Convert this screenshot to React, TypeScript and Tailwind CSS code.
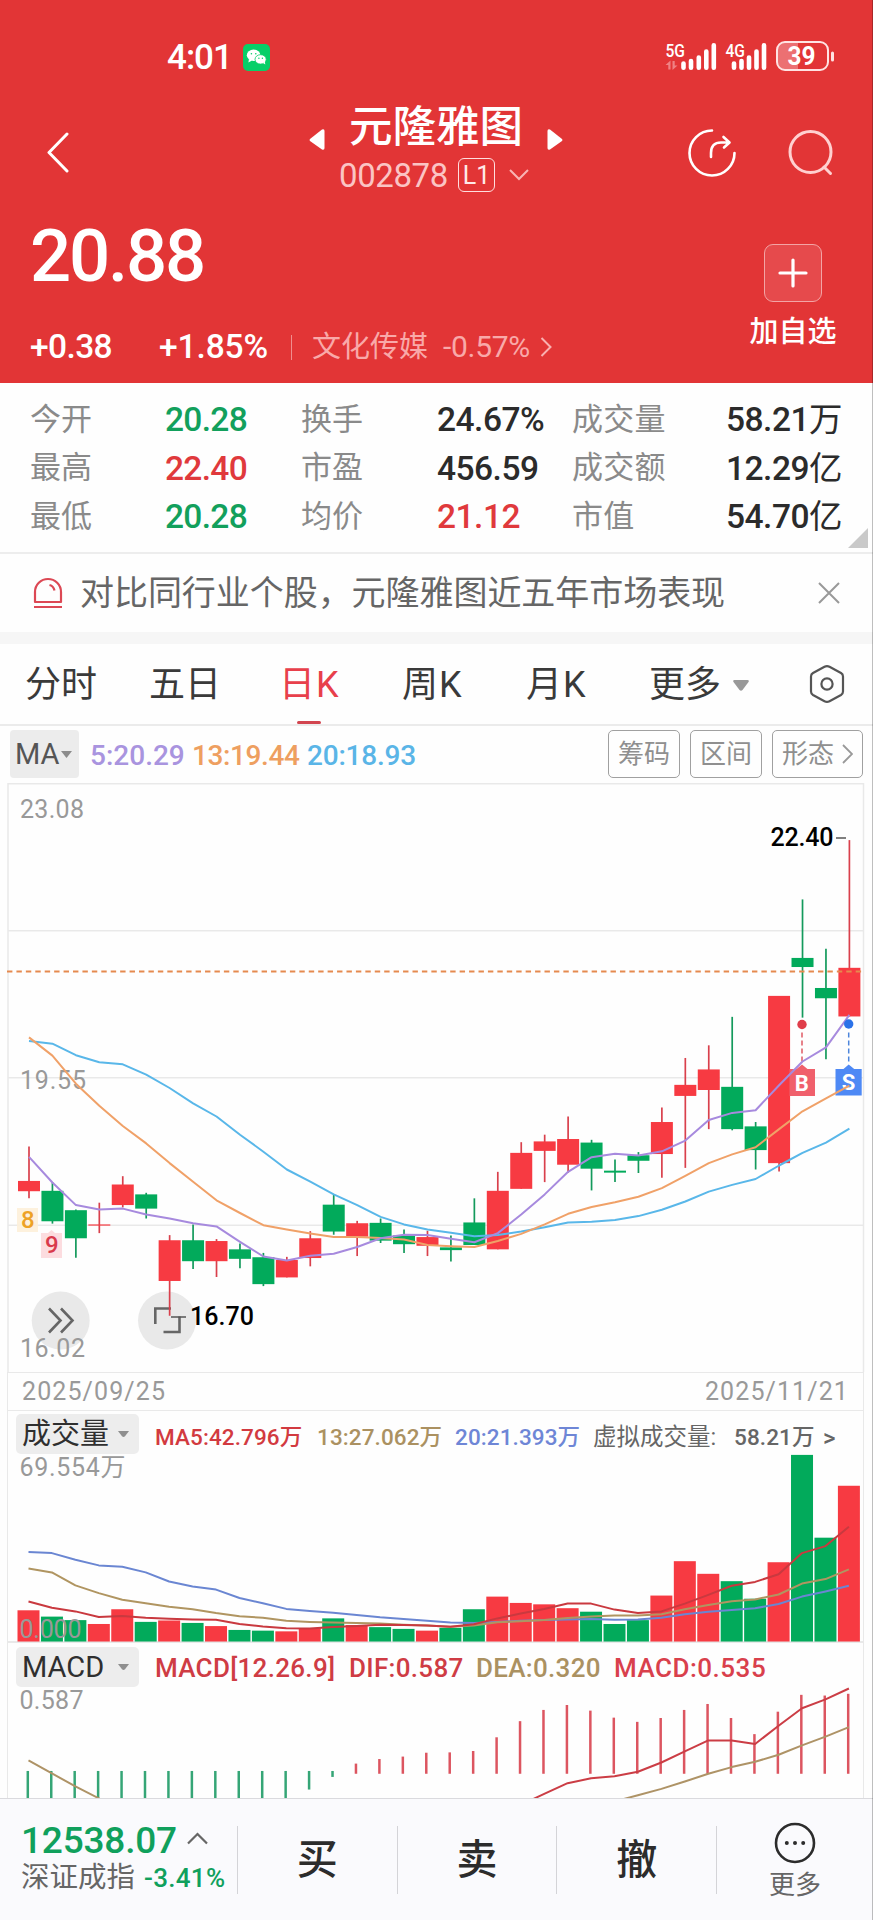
import type { ReactNode } from 'react'

interface Candle {
  up: boolean
  high: number
  top: number
  bottom: number
  low: number
}

interface Stat {
  label: string
  value: string
  color?: string
}

const UP = '#f73a42'
const DOWN = '#02aa5b'
const UP_WICK = '#d9404c'
const DOWN_WICK = '#149a5c'

// up, high, body top, body bottom, low
const RAW: [number, number, number, number, number][] = [
  [1, 927, 1014, 1040, 1058],
  [0, 1017, 1039, 1116, 1122],
  [0, 1086, 1088, 1159, 1208],
  [1, 1069, 1124, 1127, 1146],
  [1, 1002, 1023, 1075, 1081],
  [0, 1044, 1048, 1084, 1109],
  [1, 1151, 1164, 1267, 1355],
  [0, 1124, 1164, 1217, 1237],
  [1, 1161, 1166, 1217, 1257],
  [0, 1172, 1187, 1211, 1235],
  [0, 1196, 1207, 1275, 1280],
  [1, 1206, 1214, 1258, 1258],
  [1, 1141, 1159, 1209, 1230],
  [0, 1049, 1074, 1142, 1150],
  [1, 1115, 1121, 1155, 1204],
  [0, 1109, 1120, 1165, 1171],
  [0, 1137, 1152, 1174, 1196],
  [1, 1140, 1156, 1178, 1204],
  [0, 1152, 1182, 1189, 1218],
  [0, 1058, 1119, 1176, 1176],
  [1, 991, 1039, 1187, 1187],
  [1, 916, 943, 1034, 1034],
  [1, 897, 914, 938, 1017],
  [1, 851, 908, 973, 993],
  [0, 910, 917, 983, 1038],
  [0, 960, 988, 993, 1017],
  [0, 941, 949, 963, 994],
  [1, 828, 865, 946, 1006],
  [1, 703, 771, 799, 981],
  [1, 671, 732, 784, 883],
  [0, 599, 776, 883, 886],
  [0, 865, 876, 936, 985],
  [1, 546, 546, 969, 990],
  [0, 302, 450, 473, 601],
  [0, 427, 526, 552, 706],
  [1, 152, 475, 598, 598]
]

const CANDLES: Candle[] = RAW.map(([up, high, top, bottom, low]) => ({ up: up === 1, high, top, bottom, low }))

const MA5 = [953, 1018, 1075, 1086, 1084, 1099, 1109, 1121, 1129, 1168, 1205, 1215, 1203, 1198, 1181, 1159, 1150, 1151, 1160, 1169, 1146, 1099, 1048, 991, 954, 945, 950, 939, 912, 860, 842, 835, 772, 712, 676, 594]
const MA13 = [651, 697, 768, 824, 875, 919, 969, 1016, 1063, 1095, 1126, 1137, 1147, 1156, 1156, 1158, 1162, 1176, 1179, 1181, 1166, 1148, 1124, 1097, 1080, 1068, 1054, 1032, 1001, 969, 947, 929, 883, 838, 805, 773]
const MA20 = [660, 667, 696, 714, 719, 745, 779, 818, 851, 897, 940, 985, 1016, 1048, 1075, 1105, 1124, 1137, 1145, 1154, 1151, 1142, 1131, 1119, 1117, 1113, 1103, 1087, 1066, 1041, 1024, 1009, 975, 943, 917, 882]

const VOLUME = [685, 703, 713, 724, 682, 718, 714, 721, 730, 741, 743, 745, 736, 708, 727, 733, 738, 743, 735, 682, 646, 664, 668, 679, 689, 724, 713, 643, 545, 581, 602, 652, 548, 242, 478, 330]
const VOL5 = [660, 678, 688, 704, 701, 706, 709, 711, 712, 724, 731, 736, 737, 733, 730, 726, 727, 728, 732, 725, 708, 694, 681, 666, 666, 683, 693, 688, 666, 641, 615, 604, 582, 522, 502, 447]
const VOL13 = [566, 577, 614, 636, 655, 665, 675, 682, 693, 702, 706, 715, 718, 720, 721, 723, 726, 728, 732, 728, 719, 716, 713, 707, 703, 700, 700, 696, 682, 670, 659, 654, 640, 609, 596, 568]
const VOL20 = [519, 522, 541, 557, 561, 577, 603, 617, 626, 650, 665, 681, 687, 692, 698, 705, 710, 715, 720, 721, 718, 715, 713, 711, 710, 712, 711, 706, 696, 689, 684, 679, 667, 646, 631, 615]

// histogram ends; the zero axis sits at 1147
const HIST = [1260, 1260, 1260, 1260, 1260, 1260, 1260, 1260, 1260, 1260, 1260, 1260, 1196, 1160, 1122, 1109, 1102, 1091, 1090, 1086, 1047, 1001, 969, 955, 971, 991, 1003, 992, 969, 952, 992, 1038, 974, 926, 928, 923]
const DIF = [1240, 1208, 1178, 1164, 1158, 1145, 1119, 1087, 1056, 1056, 1066, 1014, 964, 939, 908]
const DEA_HEAD = [1113, 1150, 1187, 1221, 1256]
const DEA = [1230, 1212, 1194, 1173, 1151, 1132, 1117, 1097, 1070, 1045, 1018]

const STATS: Stat[][] = [
  [
    { label: '今开', value: '20.28', color: 'text-[#12a05c]' },
    { label: '换手', value: '24.67%' },
    { label: '成交量', value: '58.21万' }
  ],
  [
    { label: '最高', value: '22.40', color: 'text-[#e0393c]' },
    { label: '市盈', value: '456.59' },
    { label: '成交额', value: '12.29亿' }
  ],
  [
    { label: '最低', value: '20.28', color: 'text-[#12a05c]' },
    { label: '均价', value: '21.12', color: 'text-[#e0393c]' },
    { label: '市值', value: '54.70亿' }
  ]
]

const xAt = (i: number) => 29 + i * 23.44
const priceY = (v: number) => v * 0.3954 - 3
const volY = (v: number) => v * 0.3508 - 41
const macdY = (v: number) => v * 0.3508 - 273

const line = (values: number[], y: (v: number) => number, start = 0) =>
  values.map((v, i) => `${xAt(i + start).toFixed(1)},${y(v).toFixed(1)}`).join(' ')

function StatusBar() {
  return (
    <div className="flex h-[114px] items-center pl-[167px]">
      <span className="w-[76px] text-[35px] leading-none font-medium tracking-[-1px]">4:01</span>
      <svg width="27" height="27" viewBox="0 0 27 27">
        <rect width="27" height="27" rx="5" fill="#07cf68" />
        <ellipse cx="10.6" cy="11.3" rx="6.8" ry="5.7" fill="#fff" />
        <path d="M6 15l-.6 3.4 3.6-1.8z" fill="#fff" />
        <ellipse cx="17.6" cy="15.4" rx="5.6" ry="4.7" fill="#fff" stroke="#07cf68" strokeWidth=".8" />
        <path d="M20 19l2.3 1.6-.5-3z" fill="#fff" />
        <circle cx="8.4" cy="9.8" r=".8" fill="#07cf68" />
        <circle cx="12.8" cy="9.8" r=".8" fill="#07cf68" />
        <circle cx="15.9" cy="14.2" r=".7" fill="#07cf68" />
        <circle cx="19.4" cy="14.2" r=".7" fill="#07cf68" />
      </svg>
      <svg width="175" height="34" viewBox="0 0 175 34" className="-mt-[3px] ml-[392px]" fill="#fff">
        <text x="3.5" y="17.500" fontSize="19" fontWeight="500" textLength="19.5" lengthAdjust="spacingAndGlyphs">5G</text>
        <g fill="#ef8284">
          <path d="M3.500 26l5-4.500v9h-2.200v-4.500zM15.500 26.500l-5 4.500v-9h2.200v4.500z" />
        </g>
        <g stroke="#fff" strokeWidth="4.600" strokeLinecap="round">
          <path d="M21.500 24.500v4.200M29 22v6.700M36.800 18.500v10.200M44.300 12.500v16.200M51.800 6.300v22.400" />
          <path d="M72 24.500v4.200M79.500 22v6.700M87 18.500v10.200M94.500 12.500v16.200M102 6.300v22.400" />
        </g>
        <text x="63.500" y="17.500" fontSize="19" fontWeight="500" textLength="19.5" lengthAdjust="spacingAndGlyphs">4G</text>
        <path d="M123 3h13v28h-13q-8 0-8-8V11q0-8 8-8z" fill="#ec7072" />
        <rect x="115" y="3" width="51" height="28" rx="8" fill="none" stroke="#ffe3e3" strokeWidth="2" />
        <path d="M170.500 14v7" stroke="#ffe3e3" strokeWidth="3" strokeLinecap="round" />
        <text x="125.500" y="26" fontSize="25" fontWeight="700" textLength="28" lengthAdjust="spacingAndGlyphs">39</text>
      </svg>
    </div>
  )
}

function Header() {
  return (
    <header className="h-[383px] bg-[#e23536] text-white">
      <StatusBar />

      {/* Title bar */}
      <div className="-mt-[16px] flex h-[98px] items-start">
        <svg width="22" height="42" viewBox="0 0 22 42" className="mt-[34px] ml-[47px]" fill="none" stroke="#fff" strokeWidth="3" strokeLinecap="round" strokeLinejoin="round">
          <path d="M20 2L2 20.500L20 39" />
        </svg>
        <div className="ml-[240px] w-[254px]">
          <div className="flex h-[57px] items-center justify-between">
            <svg width="16" height="24" viewBox="0 0 16 24" className="mt-[26px]" fill="#fff">
              <path d="M1 11L13 1.500Q15.500 .5 15.500 3V20Q15.500 22.500 13 21.500L1 13Q0 12 1 11z" />
            </svg>
            <span className="pt-[2px] text-[43.500px] leading-none font-medium">元隆雅图</span>
            <svg width="16" height="24" viewBox="0 0 16 24" className="mt-[26px]" fill="#fff">
              <path d="M15 11L3 1.500Q.5 .5 .5 3V20Q.5 22.500 3 21.500L15 13Q16 12 15 11z" />
            </svg>
          </div>
          <div className="mt-[3px] flex h-[34px] items-center pl-[30px]">
            <span className="w-[119px] text-[33px] leading-none tracking-[-0.400px] text-[#fbc4c4]">002878</span>
            <span className="flex h-[34px] w-[37px] items-center justify-center rounded-[6px] border-[1.500px] border-[#ffdede] text-[25px] leading-none text-[#ffe9e9]">L1</span>
            <svg width="20" height="12" viewBox="0 0 20 12" className="ml-[14px]" fill="none" stroke="#f9b4b4" strokeWidth="2">
              <path d="M1 1l9 9 9-9" />
            </svg>
          </div>
        </div>
        <svg width="50" height="50" viewBox="0 0 50 50" className="mt-[30px] ml-[124px]" fill="none" stroke="#fff" strokeWidth="2.600" strokeLinecap="round" strokeLinejoin="round">
          <path d="M25 2.500A22.500 22.500 0 1 0 47.500 25" />
          <path d="M24 29V25Q24 14.500 34 14.500H42M36.500 9L42.500 14.500L37 19.500" />
        </svg>
        <svg width="50" height="50" viewBox="0 0 50 50" className="mt-[30px] ml-[51px]" fill="none" stroke="#ffd0d0" strokeWidth="3" strokeLinecap="round">
          <circle cx="22.500" cy="24" r="20.500" />
          <path d="M36 39l6.500 6.500" />
        </svg>
      </div>

      {/* Price block */}
      <div className="flex h-[187px] justify-between">
        <div className="pl-[30px]">
          <div className="mt-[24px] h-[73px] text-[72.500px] leading-[73px] font-medium tracking-[-2.200px]">20.88</div>
          <div className="mt-[36px] flex h-[36px] items-center text-[33.500px] leading-none">
            <span className="w-[129px] font-medium tracking-[-0.600px]">+0.38</span>
            <span className="w-[132px] font-medium tracking-[-0.100px]">+1.85%</span>
            <span className="h-[25px] w-px bg-[#f08e8e]" />
            <span className="ml-[20px] w-[131px] text-[29px] text-[#f9a9a9]">文化传媒</span>
            <span className="w-[97px] text-[30px] tracking-[-0.300px] text-[#f9a9a9]">-0.57%</span>
            <svg width="12" height="20" viewBox="0 0 12 20" fill="none" stroke="#f9b0b0" strokeWidth="2">
              <path d="M1.500 1l9 9-9 9" />
            </svg>
          </div>
        </div>
        <div className="mt-[48px] mr-[36px] flex w-[88px] flex-col items-center">
          <div className="flex size-[58px] items-center justify-center rounded-[9px] border border-[#f3a4a5] bg-[#e64a4c]">
            <svg width="30" height="30" viewBox="0 0 30 30" stroke="#fff" strokeWidth="3.200" strokeLinecap="round">
              <path d="M15 2v26M2 15h26" />
            </svg>
          </div>
          <span className="mt-[14px] text-[29px] leading-[32px] font-medium whitespace-nowrap">加自选</span>
        </div>
      </div>
    </header>
  )
}

function StatsPanel() {
  return (
    <section className="relative h-[171px] border-b-2 border-[#ededed] pt-[12px]">
      {STATS.map((row, i) => (
        <div key={i} className="flex h-[48.500px] items-center pr-[31px] pl-[30px] text-[33.500px] leading-none text-[#2b2b2b]">
          <span className="w-[135px] text-[31px] text-[#8a8a8a]">{row[0].label}</span>
          <span className={`w-[136px] pt-px font-medium tracking-[-0.700px] ${row[0].color ?? ''}`}>{row[0].value}</span>
          <span className="w-[136px] text-[31px] text-[#8a8a8a]">{row[1].label}</span>
          <span className={`w-[135px] pt-px font-medium tracking-[-0.500px] ${row[1].color ?? ''}`}>{row[1].value}</span>
          <span className="text-[31px] tracking-[0.300px] text-[#8a8a8a]">{row[2].label}</span>
          <span className="ml-auto pt-px font-medium tracking-[-0.500px]">
            {row[2].value.slice(0, -1)}
            <span className="font-normal">{row[2].value.slice(-1)}</span>
          </span>
        </div>
      ))}
      <svg width="20" height="20" viewBox="0 0 20 20" className="absolute right-[5px] bottom-[4px]" fill="#c9c9c9">
        <path d="M20 0v20H0z" />
      </svg>
    </section>
  )
}

function Notice() {
  return (
    <section className="flex h-[78px] items-center pl-[33px]">
      <svg width="30" height="32" viewBox="0 0 30 32" fill="none" stroke="#dc4854" strokeWidth="2.200">
        <path d="M2 25V15a13 13 0 0 1 26 0v10z" strokeLinejoin="round" />
        <path d="M16.500 8q4 1 5 5.500M1 30h28" />
      </svg>
      <span className="ml-[17px] w-[738px] text-[34px] leading-none tracking-[-0.050px] text-[#666]">对比同行业个股，元隆雅图近五年市场表现</span>
      <svg width="22" height="22" viewBox="0 0 22 22" stroke="#999" strokeWidth="2">
        <path d="M1 1l20 20M21 1L1 21" />
      </svg>
    </section>
  )
}

function PeriodTabs() {
  return (
    <nav className="flex h-[82px] items-center border-b-2 border-[#ebebeb] pl-[25px] text-[36px] leading-none text-[#3a3a3a]">
      <span className="w-[124px] pt-[2px]">分时</span>
      <span className="w-[130px] pt-[2px]">五日</span>
      <span className="relative flex h-full w-[123px] items-center pt-[2px] tracking-[1px] text-[#e8404b]">
        日K
        <i className="absolute bottom-0 left-[18px] h-[3px] w-[24px] rounded-sm bg-[#d2454f]" />
      </span>
      <span className="w-[124px] pt-[2px] tracking-[1px]">周K</span>
      <span className="w-[123px] pt-[2px] tracking-[1px]">月K</span>
      <span className="w-[84px] pt-[2px]">更多</span>
      <svg width="16" height="11" viewBox="0 0 16 11" className="mt-[2px]" fill="#999">
        <path d="M1.500 0h13q2 0 1 2L9.500 10q-1.500 1.500-3 0L.5 2Q-.5 0 1.500 0z" />
      </svg>
      <svg width="36" height="40" viewBox="0 0 36 40" className="ml-[60px]" fill="none" stroke="#555" strokeWidth="2.200" strokeLinejoin="round">
        <path d="M15.500 2.700Q18 1.400 20.500 2.700L32 9Q34 10.200 34 12.500V27.500Q34 29.800 32 31L20.500 37.300Q18 38.600 15.500 37.300L4 31Q2 29.800 2 27.500V12.500Q2 10.200 4 9z" />
        <circle cx="18" cy="20" r="5.600" />
      </svg>
    </nav>
  )
}

function PillButton({ children }: { children: ReactNode }) {
  return (
    <button className="flex h-[48px] items-center rounded-[5px] border-[1.500px] border-[#a0a0a0] px-[9px] text-[26px] leading-none text-[#8f8f8f]">
      {children}
    </button>
  )
}

function MaRow() {
  return (
    <div className="flex h-[57px] items-center pr-[10px] pb-[1px] pl-[10px] text-[28px] leading-none">
      <div className="mr-[11px] flex h-[48px] w-[69px] items-center rounded-[4px] bg-[#ececec] pl-[5px] text-[#555]">
        <span className="w-[46px] text-[29px]">MA</span>
        <svg width="11" height="7" viewBox="0 0 11 7" fill="#8c8c8c">
          <path d="M0 0h11L5.500 7z" />
        </svg>
      </div>
      <span className="w-[102px] pt-[3px] font-medium text-[#a994df]">5:20.29</span>
      <span className="w-[115px] pt-[3px] font-medium tracking-[-0.400px] text-[#ee9f60]">13:19.44</span>
      <span className="pt-[3px] font-medium tracking-[-0.200px] text-[#5ab5e7]">20:18.93</span>
      <div className="ml-auto flex gap-[10px]">
        <PillButton>筹码</PillButton>
        <PillButton>区间</PillButton>
        <PillButton>
          形态
          <svg width="11" height="20" viewBox="0 0 11 20" className="ml-[8px]" fill="none" stroke="#999" strokeWidth="1.800">
            <path d="M1 1l9 9-9 9" />
          </svg>
        </PillButton>
      </div>
    </div>
  )
}

function CandleChart() {
  return (
    <svg width="872" height="589" viewBox="0 0 872 589" className="block">
      <g stroke="#e9e9e9" strokeWidth="1.500" fill="none">
        <path d="M8 589V.8H863.500V589" />
        <path d="M8 147.700H863M8 294.700H863M8 442.200H863" />
      </g>
      <g fill="#999" fontSize="25">
        <text x="20" y="35" textLength="64">23.08</text>
        <text x="20" y="306" textLength="66">19.55</text>
      </g>

      <g opacity=".9">
        <rect x="17" y="425" width="21" height="24" fill="#fdf0da" />
        <path d="M41 450h7l3.500-3 3.500 3h7v25H41z" fill="#fcd9dc" />
      </g>
      <text x="21" y="445" fontSize="24" fontWeight="500" fill="#eda225">8</text>
      <text x="45" y="470" fontSize="24" fontWeight="500" fill="#d93a4c">9</text>

      <circle cx="60.700" cy="537.500" r="29" fill="#e9e9e9" />
      <circle cx="167" cy="537.500" r="29" fill="#e9e9e9" />
      <g fill="none" stroke="#666" strokeWidth="2.600">
        <path d="M49 525.500L60.500 537.500L49 549.500M61 525.500L72.500 537.500L61 549.500" />
        <path d="M155.300 541V525.500H171M163.500 549H179.500V533.500" />
      </g>
      <text x="20" y="573.500" textLength="65" fontSize="25" fill="#999">16.02</text>

      {CANDLES.map((c, i) => (
        <g key={i}>
          <path d={`M${xAt(i)} ${priceY(c.high)}V${priceY(c.low)}`} stroke={c.up ? UP_WICK : DOWN_WICK} strokeWidth="1.700" />
          <rect x={xAt(i) - 11} y={priceY(c.top)} width="22" height={priceY(c.bottom) - priceY(c.top)} fill={c.up ? UP : DOWN} />
        </g>
      ))}

      <path d="M7 188.400H863.500" stroke="#e58a4f" strokeWidth="2" strokeDasharray="5.400 4.030" />

      {/* Trade markers */}
      <circle cx="802" cy="241.500" r="4.700" fill="#e03d4a" />
      <path d="M802 249.500v29" stroke="#e05a64" strokeWidth="1.500" strokeDasharray="5 3" />
      <path d="M789.500 286h7l5.500-4.500 5.500 4.500h7.500v27h-25.500z" fill="#f0606c" />
      <path d="M848.700 249.500v29" stroke="#4d86dc" strokeWidth="1.500" strokeDasharray="5 3" />
      <path d="M835.500 286h8l5.200-4.500 5.500 4.500h7.500v26.500h-26.200z" fill="#4e89f5" />
      <g fill="#fff" fontSize="22" fontWeight="700">
        <text x="794.800" y="307.500">B</text>
        <text x="841.700" y="307">S</text>
      </g>

      <g fill="none" strokeWidth="2" strokeLinejoin="round">
        <polyline points={line(MA20, priceY)} stroke="#59b7e9" />
        <polyline points={line(MA13, priceY)} stroke="#f0a168" />
        <polyline points={line(MA5, priceY)} stroke="#a78ade" />
      </g>
      <circle cx="848.700" cy="241" r="4.700" fill="#2b72e8" />

      <path d="M171 534H186M836 55H846" stroke="#555" strokeWidth="1.300" />
      <g fill="#000" fontSize="25" fontWeight="500">
        <text x="190" y="542" textLength="64">16.70</text>
        <text x="770.500" y="62.500" textLength="63">22.40</text>
      </g>
    </svg>
  )
}

function IndicatorLabel({ children }: { children: ReactNode }) {
  return (
    <div className="flex h-[40px] w-[123px] items-center justify-between rounded-[5px] bg-[#ededed] pr-[10px] pl-[6px] text-[29px] leading-none text-[#2f2f2f]">
      {children}
      <svg width="11" height="6" viewBox="0 0 11 6" fill="#8f8f8f">
        <path d="M0 0h11L7 5.300q-1.500 1.200-3 0z" />
      </svg>
    </div>
  )
}

function VolumePanel() {
  return (
    <section className="mr-[9px] ml-[7px] h-[232px] border-x-[1.500px] border-b-2 border-[#e9e9e9]">
      <div className="flex h-[46px] items-center pl-[8px] text-[22.500px] leading-none whitespace-nowrap">
        <IndicatorLabel>成交量</IndicatorLabel>
        <div className="flex items-center pt-[7px] pl-[16px] font-medium">
          <span className="w-[162px] tracking-[0.100px] text-[#d23a40]">MA5:42.796万</span>
          <span className="w-[138px] tracking-[0.100px] text-[#ab9161]">13:27.062万</span>
          <span className="w-[138px] tracking-[0.100px] text-[#6e86d6]">20:21.393万</span>
          <span className="w-[141px] text-[23.500px] font-normal text-[#666]">虚拟成交量:</span>
          <span className="w-[89px] tracking-[0.100px] text-[#666]">58.21万</span>
          <span className="text-[24px] text-[#666]">&gt;</span>
        </div>
      </div>
      <svg width="855" height="184" viewBox="8.500 46 855 184" className="block overflow-visible">
        {VOLUME.map((v, i) => (
          <rect key={i} x={xAt(i) - 11} y={volY(v)} width="22" height={volY(774) - volY(v)} fill={CANDLES[i].up ? UP : DOWN} />
        ))}
        <g fill="none" strokeWidth="2" strokeLinejoin="round">
          <polyline points={line(VOL20, volY)} stroke="#6a86d2" />
          <polyline points={line(VOL13, volY)} stroke="#b09561" />
          <polyline points={line(VOL5, volY)} stroke="#c9393f" />
        </g>
        <g fill="#999" fontSize="25">
          <text x="20" y="65" textLength="106">69.554万</text>
          <text x="20" y="227" textLength="62">0.000</text>
        </g>
      </svg>
    </section>
  )
}

function MacdPanel() {
  return (
    <section className="mr-[9px] ml-[7px] h-[155px] overflow-hidden border-x-[1.500px] border-[#e9e9e9]">
      <div className="flex h-[46px] items-center pt-[2px] pl-[8px] text-[26px] leading-none whitespace-nowrap">
        <IndicatorLabel>MACD</IndicatorLabel>
        <div className="flex pt-[2px] pl-[16px] font-medium tracking-[0.300px]">
          <span className="w-[194px] text-[#cf3c44]">MACD[12.26.9]</span>
          <span className="w-[127px] text-[#cf3c44]">DIF:0.587</span>
          <span className="w-[138px] text-[#ab9161]">DEA:0.320</span>
          <span className="tracking-[0.500px] text-[#d9404c]">MACD:0.535</span>
        </div>
      </div>
      <svg width="855" height="109" viewBox="8.500 46 855 109" className="block overflow-visible">
        <text x="20" y="66" textLength="64" fontSize="25" fill="#999">0.587</text>
        {HIST.map((v, i) => (
          <path
            key={i}
            d={`M${xAt(i) - 0.7} ${macdY(v > 1147 ? 1143 : 1151)}V${macdY(v)}`}
            stroke={v > 1147 ? '#35a576' : '#dc5560'}
            strokeWidth="2.500"
          />
        ))}
        <g fill="none" strokeWidth="2" strokeLinejoin="round">
          <polyline points={line(DIF, macdY, 21)} stroke="#cb3d45" />
          <polyline points={line(DEA_HEAD, macdY)} stroke="#ae9366" />
          <polyline points={line(DEA, macdY, 25)} stroke="#ae9366" />
        </g>
      </svg>
    </section>
  )
}

function TradeBar() {
  return (
    <footer className="flex h-[122px] border-t-[1.500px] border-[#dadade] bg-[#fafafd]">
      <div className="flex w-[237px] flex-col pt-[22px] pl-[21px] leading-none text-[#10a05c]">
        <div className="flex h-[38px] items-center">
          <span className="w-[166px] text-[37px] font-medium tracking-[-0.200px]">12538.07</span>
          <svg width="21" height="13" viewBox="0 0 21 13" className="-mt-[4px]" fill="none" stroke="#666" strokeWidth="2.200">
            <path d="M1 11.500L10.500 2L20 11.500" />
          </svg>
        </div>
        <div className="mt-[3px] flex h-[32px] items-center">
          <span className="w-[123px] text-[28.500px] text-[#666]">深证成指</span>
          <span className="text-[26px] font-medium tracking-[0.300px]">-3.41%</span>
        </div>
      </div>
      {['买', '卖', '撤'].map(label => (
        <div key={label} className="flex w-[159.700px] items-center">
          <i className="h-[68px] w-px bg-[#d4d4d8]" />
          <span className="flex-1 pt-[2px] text-center text-[41px] leading-none font-medium text-[#2c2c2c]">{label}</span>
        </div>
      ))}
      <div className="flex flex-1 items-center">
        <i className="h-[68px] w-px bg-[#d4d4d8]" />
        <div className="flex flex-1 flex-col items-center pt-[2px]">
          <svg width="42" height="42" viewBox="0 0 42 42" fill="#2c2c2c">
            <circle cx="21" cy="21" r="19" fill="none" stroke="#2c2c2c" strokeWidth="2.600" />
            <circle cx="12.800" cy="21" r="2" />
            <circle cx="21" cy="21" r="2" />
            <circle cx="29.200" cy="21" r="2" />
          </svg>
          <span className="mt-[7px] text-[26px] leading-[28px] text-[#666]">更多</span>
        </div>
      </div>
    </footer>
  )
}

export default function App() {
  return (
    <div className="relative h-[1920px] w-[873px] overflow-hidden bg-[#fefefe] font-[Roboto,'Noto_Sans_CJK_SC',sans-serif]">
      <Header />
      <StatsPanel />
      <Notice />
      <div className="h-[12px] bg-[#f6f6f6]" />
      <PeriodTabs />
      <MaRow />
      <CandleChart />
      <div className="mr-[9px] ml-[7px] flex h-[39px] items-center justify-between border-[1.500px] border-[#e9e9e9] px-[14px] text-[25px] leading-none tracking-[1.100px] text-[#999]">
        <span>2025/09/25</span>
        <span>2025/11/21</span>
      </div>
      <VolumePanel />
      <MacdPanel />
      <TradeBar />
      <i className="absolute top-0 right-0 h-full w-px bg-black/25" />
    </div>
  )
}
